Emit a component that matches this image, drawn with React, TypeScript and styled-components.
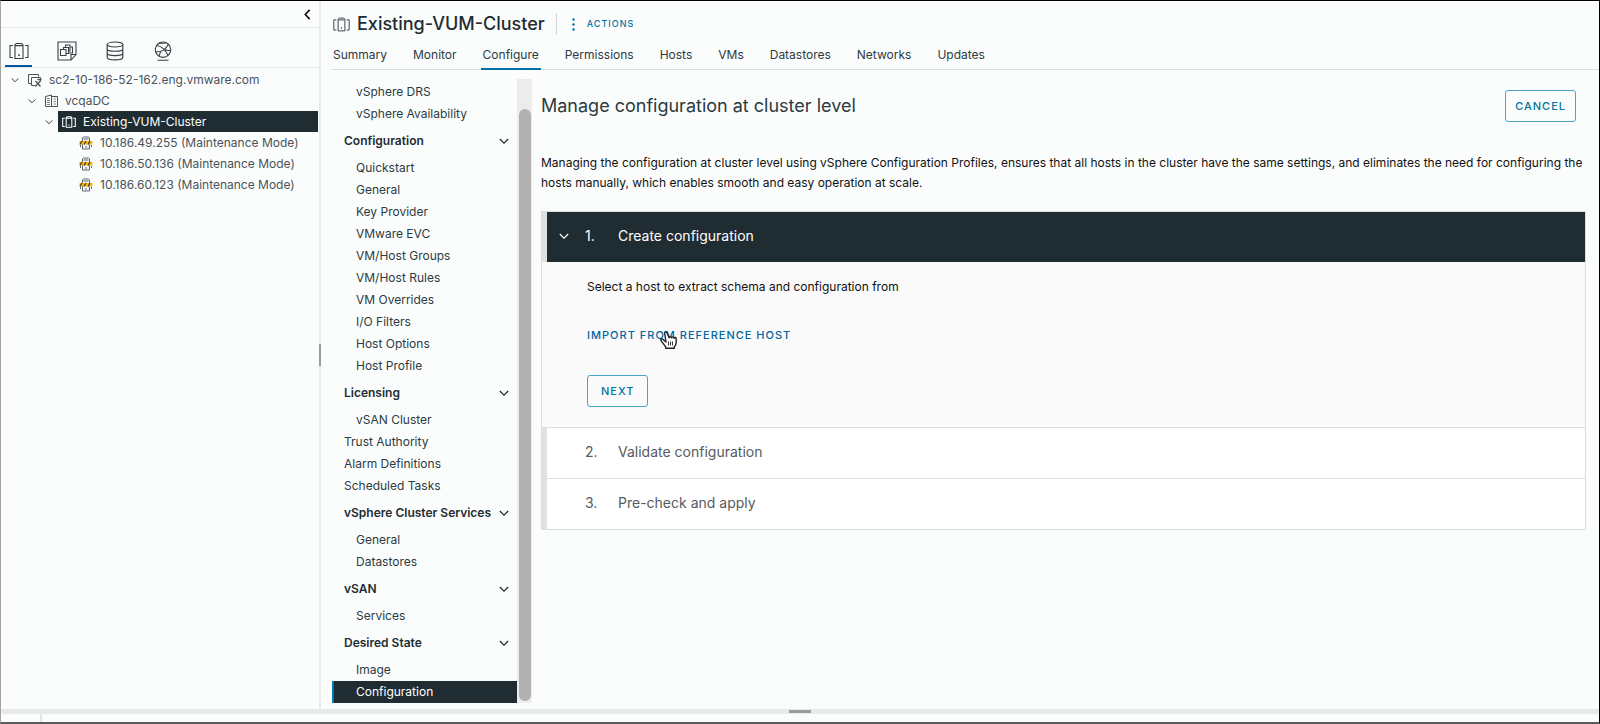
import React from "react";
import styled, { createGlobalStyle } from "styled-components";

const c = {
  page: "#fbfdfd",
  dark: "#1f2c32",
  text: "#2c3a41",
  soft: "#4a5358",
  blue: "#0072a3",
  line: "#e6e9ea",
};

const GlobalStyle = createGlobalStyle`
  * { box-sizing: border-box; }
  body {
    margin: 0;
    background: ${c.page};
    color: ${c.text};
    font-family: Inter, "Liberation Sans", sans-serif;
    font-size: 12px;
    line-height: 20px;
  }
  button { font: inherit; color: inherit; background: none; border: 0; padding: 0; cursor: pointer; }
  a { color: inherit; text-decoration: none; }
  ul { list-style: none; margin: 0; padding: 0; }
  h1, h2, h3, p { margin: 0; }
  svg { display: block; flex: none; }
`;

const Shell = styled.div`
  min-height: 100vh;
  display: flex;
  flex-direction: column;
  border: 1px solid #000;
  border-left-color: #a4a4a4;
  border-bottom: 2px solid #5c5c5c;
`;

const Workspace = styled.div`
  flex: 1;
  display: grid;
  grid-template-columns: 318px 2px minmax(0, 1fr);
`;

const Splitter = styled.div<{ $horizontal?: boolean }>`
  display: flex;
  align-items: center;
  justify-content: center;
  background: #e8e9e9;
  height: ${(p) => (p.$horizontal ? "5px" : "auto")};
`;

const Grip = styled.span<{ $horizontal?: boolean }>`
  background: #9a9c9d;
  width: ${(p) => (p.$horizontal ? "22px" : "2px")};
  height: ${(p) => (p.$horizontal ? "3px" : "22px")};
`;

const Footer = styled.footer`
  height: 8px;
  padding-left: 39px;
`;

const FooterMark = styled.div`
  width: 2px;
  height: 100%;
  background: #e3e4e4;
`;

/* Inventory sidebar */

const Sidebar = styled.aside`
  min-width: 0;
`;

const CollapseBar = styled.div`
  height: 27px;
  display: flex;
  align-items: center;
  justify-content: flex-end;
  padding-right: 6px;
  border-bottom: 1px solid ${c.line};
  color: #111;
`;

const InventoryTabs = styled.div`
  height: 40px;
  display: flex;
  align-items: flex-end;
  gap: 21px;
  padding-left: 4px;
  border-bottom: 1px solid ${c.line};
`;

const InventoryTab = styled.button<{ $active?: boolean }>`
  width: 27px;
  height: 28px;
  display: flex;
  justify-content: center;
  padding-top: 2px;
  color: #3a4145;
  border-bottom: 2px solid ${(p) => (p.$active ? "#0057a0" : "transparent")};
`;

const Tree = styled.ul`
  padding-top: 1px;
`;

const TreeRow = styled.li<{ $level: number }>`
  height: 21px;
  display: flex;
  align-items: center;
  gap: 2px;
  padding-left: ${(p) => p.$level * 17 + 7}px;
  padding-right: 1px;
`;

const TreeCaret = styled.button`
  width: 14px;
  display: flex;
  justify-content: center;
  color: ${c.text};
`;

const TreeLabel = styled.a<{ $selected?: boolean }>`
  flex: 1;
  height: 21px;
  display: flex;
  align-items: center;
  gap: 7px;
  padding-left: 4px;
  white-space: nowrap;
  color: ${(p) => (p.$selected ? "#fff" : c.soft)};
  background: ${(p) => (p.$selected ? c.dark : "transparent")};
`;

/* Object header */

const Main = styled.main`
  min-width: 0;
  display: flex;
  flex-direction: column;
`;

const ObjectHeader = styled.header`
  height: 43px;
  display: flex;
  align-items: center;
  padding-left: 12px;
  padding-top: 3px;
`;

const ObjectTitle = styled.h1`
  margin-left: 7px;
  font-size: 18px;
  line-height: 24px;
  font-weight: 500;
  color: ${c.dark};
`;

const HeaderDivider = styled.span`
  width: 1px;
  height: 22px;
  margin: 0 15px 0 11px;
  background: #cfd3d5;
`;

const ActionsButton = styled.button`
  display: flex;
  align-items: center;
  gap: 12px;
  color: ${c.blue};
  font-size: 9px;
  font-weight: 500;
  letter-spacing: 1px;
`;

const Tabs = styled.nav`
  height: 26px;
  display: flex;
  gap: 22px;
  margin-left: 10px;
  border-bottom: 1px solid #d6e0e6;
`;

const Tab = styled.a<{ $active?: boolean }>`
  height: 26px;
  padding: 1px 2px 0;
  border-bottom: 2px solid ${(p) => (p.$active ? c.blue : "transparent")};
`;

const Body = styled.div`
  flex: 1;
  display: grid;
  grid-template-columns: 185px 15px minmax(0, 1fr);
  padding: 9px 13px 6px 11px;
`;

/* Configure menu */

const Menu = styled.nav`
  padding-top: 2px;
`;

const MenuGroup = styled.button`
  width: 100%;
  height: 32px;
  display: flex;
  align-items: center;
  justify-content: space-between;
  padding: 0 8px 0 12px;
  font-weight: 600;
  color: ${c.dark};
`;

const MenuItem = styled.a<{ $root?: boolean; $active?: boolean }>`
  display: block;
  height: 22px;
  line-height: 22px;
  padding-left: ${(p) => (p.$root ? 10 : 22)}px;
  border-left: 2px solid ${(p) => (p.$active ? "#0079ad" : "transparent")};
  background: ${(p) => (p.$active ? c.dark : "transparent")};
  color: ${(p) => (p.$active ? "#fff" : c.text)};
`;

const ScrollTrack = styled.div`
  display: flex;
  padding: 30px 1px 2px 2px;
  background: #ececec;
`;

const ScrollThumb = styled.div`
  flex: 1;
  border-radius: 6px;
  background: #b1b1b1;
`;

/* Configuration page */

const Content = styled.section`
  padding-left: 9px;
`;

const ContentHeader = styled.div`
  display: flex;
  align-items: flex-start;
  justify-content: space-between;
  padding: 11px 10px 0 0;
`;

const PageTitle = styled.h2`
  font-size: 18px;
  line-height: 32px;
  font-weight: 400;
  color: ${c.text};
`;

const OutlineButton = styled.button<{ $compact?: boolean }>`
  height: 32px;
  padding: 0 ${(p) => (p.$compact ? 9 : 13)}px;
  border: 1px solid #4aa3c9;
  border-radius: 3px;
  color: ${c.blue};
  font-size: 11px;
  font-weight: 500;
  letter-spacing: 1px;
`;

const Intro = styled.p`
  margin: 31px 0 18px;
  color: #111;
`;

const Stepper = styled.div`
  border: 1px solid #d9dddf;
`;

const Step = styled.section`
  & + & { border-top: 1px solid #dcdfe0; }
`;

const StepHeader = styled.button<{ $open?: boolean }>`
  width: 100%;
  height: 50px;
  display: grid;
  grid-template-columns: 38px 33px 1fr;
  align-items: center;
  border-left: 5px solid #e0e2e2;
  padding-bottom: 2px;
  text-align: left;
  font-size: 14px;
  background: ${(p) => (p.$open ? c.dark : "#fff")};
  color: ${(p) => (p.$open ? "#fff" : "#565b5e")};
`;

const StepCaret = styled.span`
  padding-left: 12px;
`;

const StepBody = styled.div`
  display: flex;
  flex-direction: column;
  align-items: flex-start;
  padding: 15px 45px 20px;
  background: #fafafa;
  color: #111;
`;

const LinkButton = styled.button`
  position: relative;
  margin: 28px 0 30px;
  color: #0065a0;
  font-size: 11px;
  font-weight: 500;
  letter-spacing: 1px;
`;

const Pointer = styled.span`
  position: absolute;
  left: 73px;
  top: 6px;
`;

const Chevron = ({ size = 10, left = false }: { size?: number; left?: boolean }) => (
  <svg width={size} height={size} viewBox="0 0 10 10" fill="none" stroke="currentColor" strokeWidth={left ? 1.5 : 1.2} aria-hidden>
    {left ? <path d="M7 0.8 3 5l4 4.2" /> : <path d="M0.8 3 5 7.2 9.2 3" />}
  </svg>
);

const ClusterIcon = ({ size = 20, strokeWidth = 1.1 }: { size?: number; strokeWidth?: number }) => (
  <svg width={size} height={size} viewBox="0 0 20 20" fill="none" stroke="currentColor" strokeWidth={strokeWidth} aria-hidden>
    <path d="M4 4.5H1v12h3M16 4.5h3v12h-3M6 17.5V3.7l1.3-1.2h5.4L14 3.7v13.8zM6.5 4.6h7" />
    <circle cx="10" cy="14.2" r="0.9" fill="currentColor" stroke="none" />
  </svg>
);

const VmsIcon = () => (
  <svg width="20" height="20" viewBox="0 0 20 20" fill="none" stroke="currentColor" strokeWidth="1.1" aria-hidden>
    <path d="M1 1h18v12.5L14 19H1zM19 13.5h-5V19" />
    <path d="M3.500 8.500h5.500v6H3.500zM9 12.500h2.500v-6H6.500v2M8.500 6.500V4H13v6h-1.500M13 6h2.500v6h-4" />
  </svg>
);

const DatastoreIcon = () => (
  <svg width="20" height="20" viewBox="0 0 20 20" fill="none" stroke="currentColor" strokeWidth="1.200" aria-hidden>
    <ellipse cx="10" cy="3.500" rx="7.800" ry="2.500" />
    <path d="M2.200 3.500v13c0 3.200 15.600 3.200 15.600 0v-13M2.200 8c0 3 15.600 3 15.600 0M2.200 12.300c0 3 15.600 3 15.600 0" />
  </svg>
);

const NetworkIcon = () => (
  <svg width="20" height="20" viewBox="0 0 20 20" fill="none" stroke="currentColor" strokeWidth="1.100" aria-hidden>
    <circle cx="10" cy="8.700" r="7.700" />
    <path d="M3.500 4.500c5 .5 9 4.500 11.500 10M2.500 10.500c5 1 10.500-1.500 13-7.500M6 15.300c.3-2 1-3.800 2.300-5.300M12 8.500c1.800 1 3.700 1.200 5.500.8M5.500 2.500 13 2M4.500 19.200h11" />
  </svg>
);

const VcenterIcon = () => (
  <svg width="14" height="14" viewBox="0 0 14 14" fill="none" stroke="currentColor" aria-hidden>
    <path d="M3 10.500H0.500v-9h10v2" />
    <path d="M7 12.500H3.500v-8h9V7" />
    <path d="M7.500 8l5 5.500M12.800 7.500l-5.500 6M9.500 6.500h4" strokeWidth="1.300" />
  </svg>
);

const DatacenterIcon = () => (
  <svg width="13" height="13" viewBox="0 0 13 13" fill="none" stroke="currentColor" aria-hidden>
    <path d="M0.500 12.500v-10l6-1.500v11.500zM6.500 2.500h6v10h-6" />
    <path d="M2 4.500h3M2 6.500h3M2 8.500h3M2 10.500h3M8.500 5h2.500M8.500 7.500h2.500M8.500 10h2.500" strokeOpacity="0.700" />
  </svg>
);

const MaintenanceHostIcon = () => (
  <svg width="14" height="14" viewBox="0 0 14 14" aria-hidden>
    <path d="M3.500 13V1.800L4.500 1h5l1 .8V13z" fill="#f4f4f4" stroke="#60686c" />
    <path d="M4.500 3h5M6 11h2" stroke="#60686c" />
    <path d="M0.500 5h13v3.500h-13z" fill="#f5b81c" />
    <path d="M1 8.500 3 5M5 8.500 7 5M9 8.500 11 5" stroke="#333" strokeWidth="1.200" />
    <path d="M1.500 9v2M12.500 9v2" stroke="#60686c" />
  </svg>
);

const Dots = () => (
  <svg width="3" height="13" viewBox="0 0 3 13" fill="currentColor" aria-hidden>
    <circle cx="1.500" cy="1.500" r="1.200" />
    <circle cx="1.500" cy="6.500" r="1.200" />
    <circle cx="1.500" cy="11.500" r="1.200" />
  </svg>
);

const HandIcon = () => (
  <svg width="18" height="18" viewBox="0 0 18 18" aria-hidden>
    <path
      d="M6 11 2.800 8.300C1.200 7 .2 8.600 1.200 9.800l4.500 6.100v1.300h8.600v-1.300c1-1.200 1.900-2.600 1.900-4.400V7.600c0-1.400-1.900-1.500-2-.2 0-1.800-2.200-2-2.500-.5-.2-1.500-2.300-1.600-2.600-.2L7 1.800C6.400.3 4.200.9 4.700 2.500z"
      fill="#fff"
      stroke="#222"
      strokeWidth="1.400"
      strokeLinejoin="round"
    />
    <path d="M8.500 10.500v4M10.500 10.500v4M12.500 10.500v4" stroke="#222" strokeWidth="0.900" />
  </svg>
);

type Entry = { label: string; kind?: "group" | "root"; active?: boolean };

const menu: Entry[] = [
  { label: "vSphere DRS" },
  { label: "vSphere Availability" },
  { label: "Configuration", kind: "group" },
  { label: "Quickstart" },
  { label: "General" },
  { label: "Key Provider" },
  { label: "VMware EVC" },
  { label: "VM/Host Groups" },
  { label: "VM/Host Rules" },
  { label: "VM Overrides" },
  { label: "I/O Filters" },
  { label: "Host Options" },
  { label: "Host Profile" },
  { label: "Licensing", kind: "group" },
  { label: "vSAN Cluster" },
  { label: "Trust Authority", kind: "root" },
  { label: "Alarm Definitions", kind: "root" },
  { label: "Scheduled Tasks", kind: "root" },
  { label: "vSphere Cluster Services", kind: "group" },
  { label: "General" },
  { label: "Datastores" },
  { label: "vSAN", kind: "group" },
  { label: "Services" },
  { label: "Desired State", kind: "group" },
  { label: "Image" },
  { label: "Configuration", active: true },
];

const tabs = ["Summary", "Monitor", "Configure", "Permissions", "Hosts", "VMs", "Datastores", "Networks", "Updates"];

const tree = [
  { label: "sc2-10-186-52-162.eng.vmware.com", level: 0, icon: <VcenterIcon />, caret: true },
  { label: "vcqaDC", level: 1, icon: <DatacenterIcon />, caret: true },
  { label: "Existing-VUM-Cluster", level: 2, icon: <ClusterIcon size={14} strokeWidth={1.5} />, caret: true, selected: true },
  { label: "10.186.49.255 (Maintenance Mode)", level: 3, icon: <MaintenanceHostIcon /> },
  { label: "10.186.50.136 (Maintenance Mode)", level: 3, icon: <MaintenanceHostIcon /> },
  { label: "10.186.60.123 (Maintenance Mode)", level: 3, icon: <MaintenanceHostIcon /> },
];

const CaretSpace = styled.span`
  width: 14px;
`;

export default function App() {
  return (
    <>
      <GlobalStyle />
      <Shell>
        <Workspace>
          <Sidebar>
            <CollapseBar>
              <button aria-label="Collapse sidebar"><Chevron left size={11} /></button>
            </CollapseBar>
            <InventoryTabs>
              <InventoryTab $active aria-label="Hosts and clusters"><ClusterIcon /></InventoryTab>
              <InventoryTab aria-label="VMs and templates"><VmsIcon /></InventoryTab>
              <InventoryTab aria-label="Storage"><DatastoreIcon /></InventoryTab>
              <InventoryTab aria-label="Networking"><NetworkIcon /></InventoryTab>
            </InventoryTabs>
            <Tree>
              {tree.map((node) => (
                <TreeRow key={node.label} $level={node.level}>
                  {node.caret ? (
                    <TreeCaret aria-label={`Toggle ${node.label}`}><Chevron size={8} /></TreeCaret>
                  ) : (
                    <CaretSpace />
                  )}
                  <TreeLabel href="#" $selected={node.selected}>
                    {node.icon}
                    {node.label}
                  </TreeLabel>
                </TreeRow>
              ))}
            </Tree>
          </Sidebar>
          <Splitter><Grip /></Splitter>
          <Main>
            <ObjectHeader>
              <ClusterIcon size={17} />
              <ObjectTitle>Existing-VUM-Cluster</ObjectTitle>
              <HeaderDivider />
              <ActionsButton><Dots />ACTIONS</ActionsButton>
            </ObjectHeader>
            <Tabs>
              {tabs.map((label) => (
                <Tab key={label} href="#" $active={label === "Configure"}>{label}</Tab>
              ))}
            </Tabs>
            <Body>
              <Menu>
                {menu.map((item, i) =>
                  item.kind === "group" ? (
                    <MenuGroup key={i}>{item.label}<Chevron /></MenuGroup>
                  ) : (
                    <MenuItem key={i} href="#" $root={item.kind === "root"} $active={item.active}>{item.label}</MenuItem>
                  )
                )}
              </Menu>
              <ScrollTrack><ScrollThumb /></ScrollTrack>
              <Content>
                <ContentHeader>
                  <PageTitle>Manage configuration at cluster level</PageTitle>
                  <OutlineButton $compact>CANCEL</OutlineButton>
                </ContentHeader>
                <Intro>
                  Managing the configuration at cluster level using vSphere Configuration Profiles, ensures that all hosts in the
                  cluster have the same settings, and eliminates the need for configuring the hosts manually, which enables smooth
                  and easy operation at scale.
                </Intro>
                <Stepper>
                  <Step>
                    <StepHeader $open aria-expanded>
                      <StepCaret><Chevron /></StepCaret>
                      <span>1.</span>
                      <span>Create configuration</span>
                    </StepHeader>
                    <StepBody>
                      <p>Select a host to extract schema and configuration from</p>
                      <LinkButton>
                        IMPORT FROM REFERENCE HOST
                        <Pointer><HandIcon /></Pointer>
                      </LinkButton>
                      <OutlineButton>NEXT</OutlineButton>
                    </StepBody>
                  </Step>
                  <Step>
                    <StepHeader>
                      <span />
                      <span>2.</span>
                      <span>Validate configuration</span>
                    </StepHeader>
                  </Step>
                  <Step>
                    <StepHeader>
                      <span />
                      <span>3.</span>
                      <span>Pre-check and apply</span>
                    </StepHeader>
                  </Step>
                </Stepper>
              </Content>
            </Body>
          </Main>
        </Workspace>
        <Splitter $horizontal><Grip $horizontal /></Splitter>
        <Footer><FooterMark /></Footer>
      </Shell>
    </>
  );
}
